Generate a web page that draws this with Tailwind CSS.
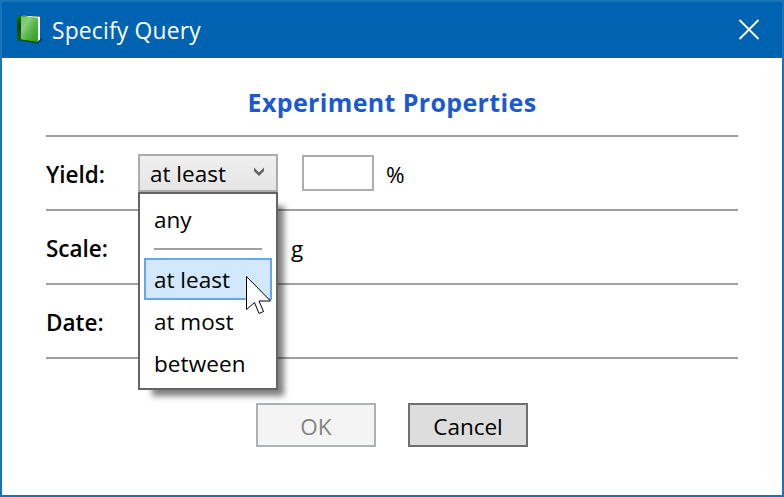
<!DOCTYPE html>
<html lang="en">
<head>
<meta charset="utf-8">
<title>Specify Query</title>
<script src="https://cdn.jsdelivr.net/npm/@tailwindcss/browser@4"></script>
</head>
<body class="bg-white">
<div class="flex h-[497px] w-[784px] flex-col overflow-hidden border-2 border-[#1873b9] bg-white font-['Open_Sans','Noto_Sans',sans-serif] text-[22.5px] leading-[42px] text-black">
  <header class="flex h-14 shrink-0 items-center bg-[#0063b1] text-white">
    <svg class="ml-[13px] h-8 w-8 shrink-0" viewBox="0 0 32 32">
      <defs>
        <linearGradient id="cover" x1="0" y1="0" x2="1" y2="1"><stop offset="0" stop-color="#5fc158"/><stop offset=".3" stop-color="#8ad07e"/><stop offset=".6" stop-color="#4fb344"/><stop offset="1" stop-color="#2c9a20"/></linearGradient>
        <linearGradient id="spine" x1="0" y1="0" x2="0" y2="1"><stop offset="0" stop-color="#197a1d"/><stop offset=".45" stop-color="#07420b"/><stop offset="1" stop-color="#176818"/></linearGradient>
      </defs>
      <path d="M21 28.500l4-5 3 2-3 3z" fill="#003766" opacity=".7"/>
      <path d="M2 1h4l19 1.500v23L22 29.500 2 26z" fill="#0a6112"/>
      <path d="M6 1.500L25 2.800V25.500L22.500 27.500V4.500z" fill="#f4f6f3"/>
      <path d="M5.500 2l17.300 1.800V28.300L5.500 25.500z" fill="url(#cover)"/>
      <path d="M2 1l4 1v23.500L2 25z" fill="url(#spine)"/>
      <path d="M2 24.800l4 .7 16.500 2.500v1.300L2 26z" fill="#0a4e10"/>
    </svg>
    <h1 class="ml-[5px] whitespace-nowrap pt-0.5 text-[22.8px] tracking-[0.2px]">Specify Query</h1>
    <svg class="mr-[21px] mb-px ml-auto h-6 w-6" viewBox="0 0 24 24" fill="none" stroke="white" stroke-width="1.8"><path d="M2.500 2l19 19M21.500 2l-19 19"/></svg>
  </header>
  <main class="flex flex-col px-11">
    <h2 class="h-[77px] whitespace-nowrap pt-[23px] text-center text-[25px] font-bold tracking-[0.36px] text-[#1c58d2]">Experiment Properties</h2>
    <div class="flex h-[74px] items-center border-t-2 border-[#a0a0a0]">
      <span class="w-[92px] whitespace-nowrap pt-[3px] font-semibold">Yield:</span>
      <div class="relative h-[38px] w-[140px]">
        <div class="flex h-[38px] items-center border-2 border-[#acacac] bg-linear-to-b from-[#f0f0f0] to-[#e5e5e5] pl-2.5">
          <span class="whitespace-nowrap pt-0.5">at least</span>
          <svg class="mr-[11px] mb-0.5 ml-auto h-2.5 w-3" viewBox="0 0 12 10" fill="#606060"><path d="M1 0.500l5 5L11 0.500v3.500L6 9 1 4z"/></svg>
        </div>
        <div class="absolute top-[38px] left-0 z-10 h-[198px] w-[140px] border-2 border-[#646464] bg-white p-1 shadow-[10px_10px_6px_-4px_rgba(0,0,0,0.5)]">
          <div class="h-[42px] pl-2.5 pt-px">any</div>
          <div class="mx-2.5 my-2 h-0.5 bg-[#a0a0a0]"></div>
          <div class="h-[42px] border-2 border-[#66a7e8] bg-[#d1e8ff] pl-2 pt-px leading-[38px]">at least</div>
          <div class="h-[42px] whitespace-nowrap pl-2.5 pt-px">at most</div>
          <div class="h-[42px] whitespace-nowrap pl-2.5 pt-px tracking-[0.1px]">between</div>
          <svg class="absolute top-[81px] left-[105px] h-[42px] w-[28px]" viewBox="0 0 28 42" fill="white" stroke="black" stroke-width="1"><path d="M1.500 1.500V34.500L9.500 27.500L14 38.500L18.500 36.500L14 26H25.500Z"/></svg>
        </div>
      </div>
      <div class="ml-6 h-9 w-[72px] border-2 border-[#abadb3] bg-white"></div>
      <span class="ml-3 pt-[3px]">%</span>
    </div>
    <div class="flex h-[74px] items-center border-t-2 border-[#a0a0a0]">
      <span class="w-[244px] pt-[3px] font-semibold">Scale:</span><span class="pl-px pt-[3px]">g</span>
    </div>
    <div class="flex h-[76px] items-center border-y-2 border-[#a0a0a0]">
      <span class="pt-[3px] font-semibold">Date:</span>
    </div>
    <div class="mt-11 flex justify-center gap-8">
      <button class="h-11 w-[120px] border-2 border-[#adb2b5] bg-[#f4f4f4] pt-0.5 leading-[40px] text-[#838383]">OK</button>
      <button class="h-11 w-[120px] border-2 border-[#707070] bg-[#dddddd] pt-0.5 leading-[40px]">Cancel</button>
    </div>
  </main>
</div>
</body>
</html>
